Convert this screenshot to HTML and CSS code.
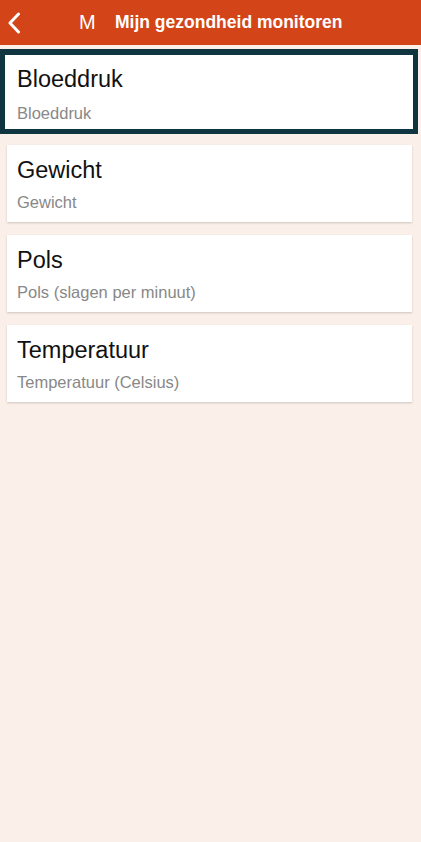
FILE: index.html
```html
<!DOCTYPE html>
<html lang="nl">
<head>
<meta charset="utf-8">
<title>Mijn gezondheid monitoren</title>
<link rel="stylesheet" href="styles.css">
</head>
<body>
<header class="topbar">
  <button class="back" aria-label="Terug">
    <svg width="14" height="22" viewBox="0 0 14 22"><path d="M11.5 2 L3 11 L11.5 20" fill="none" stroke="#fff" stroke-width="3" stroke-linecap="round" stroke-linejoin="round"/></svg>
  </button>
  <div class="title">
    <span class="logo">M</span>
    <span class="title-text">Mijn gezondheid monitoren</span>
  </div>
</header>
<main class="list">
  <div class="card selected">
    <div class="card-title">Bloeddruk</div>
    <div class="card-sub">Bloeddruk</div>
  </div>
  <div class="card">
    <div class="card-title">Gewicht</div>
    <div class="card-sub">Gewicht</div>
  </div>
  <div class="card">
    <div class="card-title">Pols</div>
    <div class="card-sub">Pols (slagen per minuut)</div>
  </div>
  <div class="card">
    <div class="card-title">Temperatuur</div>
    <div class="card-sub">Temperatuur (Celsius)</div>
  </div>
</main>
</body>
</html>
```

FILE: styles.css
```css
html, body {
  margin: 0;
  padding: 0;
}
body {
  background: #fbefe9;
  font-family: "Liberation Sans", Arial, sans-serif;
  width: 421px;
  min-height: 842px;
}
.topbar {
  height: 45px;
  background: #d44419;
  display: flex;
  align-items: center;
  position: relative;
}
.back {
  background: none;
  border: 0;
  padding: 0;
  margin-left: 6px;
  width: 16px;
  height: 24px;
  display: flex;
  align-items: center;
  justify-content: center;
}
.title {
  display: flex;
  align-items: center;
  margin-left: 57px;
  color: #fff;
}
.logo {
  font-size: 20px;
  font-weight: 400;
  width: 36px;
}
.title-text {
  font-size: 17.5px;
  font-weight: 700;
}
.list {
  display: flex;
  flex-direction: column;
  gap: 13px;
  padding: 4px 9px 0 7px;
}
.card {
  background: #fff;
  height: 77px;
  box-sizing: border-box;
  padding: 11px 10px 0 10px;
  box-shadow: 0 1px 2px rgba(0, 0, 0, 0.18);
}
.card.selected {
  margin: 0 -6px -2px -7px;
  height: 85px;
  border: 5px solid #0f3540;
  border-top-width: 6px;
  padding: 10px 12px 0 12px;
  box-shadow: none;
}
.card-title {
  font-size: 23.5px;
  color: #111;
  line-height: 28px;
}
.card-sub {
  font-size: 16.5px;
  color: #888;
  margin-top: 8px;
  line-height: 20px;
}
.card.selected .card-sub {
  margin-top: 10px;
}
```
